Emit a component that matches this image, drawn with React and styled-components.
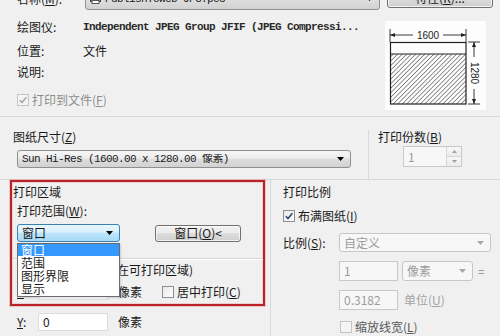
import React from 'react';
import styled, { createGlobalStyle } from 'styled-components';

const Global = createGlobalStyle`
  html, body { margin: 0; padding: 0; background: #f0f0f0; }
  body { font-family: "Noto Sans CJK SC", "Noto Sans", sans-serif; }
`;

const Dialog = styled.div`
  width: 500px;
  height: 336px;
  overflow: hidden;
  background: #f0f0f0;
  font-family: "Noto Sans CJK SC", "Noto Sans", sans-serif;
  font-size: 12px;
  line-height: 1;
  color: #1a1a1a;
  display: flex;
  flex-direction: column;
`;

const Key = styled.span`
  text-decoration: underline;
  text-underline-offset: 1px;
`;

const TopSection = styled.div`
  box-sizing: border-box;
  height: 117px;
  flex: none;
  padding: 0 7px 0 17px;
  border-bottom: 1px solid #d9d9d9;
  display: flex;
  flex-direction: column;
`;

const NameRow = styled.div`
  display: flex;
  align-items: center;
  height: 22px;
  margin-top: -12px;
  flex: none;
`;

const FieldLabel = styled.span`
  flex: none;
  width: ${(p) => p.$w}px;
  color: ${(p) => (p.$muted ? '#8d8d8d' : '#1a1a1a')};
  white-space: nowrap;
`;

const ComboBox = styled.div`
  box-sizing: border-box;
  flex: none;
  width: ${(p) => p.$w}px;
  height: ${(p) => p.$h || 18}px;
  margin-left: ${(p) => p.$ml || 0}px;
  display: flex;
  align-items: center;
  gap: 4px;
  border: 1px solid ${(p) => (p.$disabled ? '#c6c6c6' : p.$focus ? '#3c7fb1' : '#8e8f8f')};
  border-radius: 3px;
  background: ${(p) =>
    p.$disabled
      ? '#f7f7f7'
      : p.$focus
      ? 'linear-gradient(#eaf6fd, #d9f0fc 45%, #bee6fd 50%, #a7d9f5)'
      : 'linear-gradient(#f6f6f6, #ececec 45%, #dedede 50%, #d2d2d2)'};
  color: ${(p) => (p.$disabled ? '#9c9c9c' : '#1a1a1a')};
  padding: 0 6px 0 4px;
`;

const ComboText = styled.span`
  flex: 1;
  white-space: nowrap;
  overflow: hidden;
  font-family: ${(p) => (p.$mono ? '"Liberation Mono", "Noto Sans CJK SC", monospace' : 'inherit')};
  font-size: ${(p) => (p.$mono ? '11px' : '12px')};
  letter-spacing: ${(p) => (p.$mono ? '-0.6px' : '0')};
`;

const ArrowSvg = styled.svg`
  flex: none;
  width: 7px;
  height: 4px;
`;

const Arrow = ({ color = '#000' }) => (
  <ArrowSvg viewBox="0 0 7 4">
    <path d="M0 0 H7 L3.5 4 Z" fill={color} />
  </ArrowSvg>
);

const PushButton = styled.div`
  box-sizing: border-box;
  flex: none;
  width: ${(p) => p.$w}px;
  height: ${(p) => p.$h || 18}px;
  margin-left: ${(p) => p.$ml || 0}px;
  align-self: ${(p) => (p.$top ? 'flex-start' : 'center')};
  display: flex;
  align-items: center;
  justify-content: center;
  border: 1px solid #707070;
  border-radius: 3px;
  background: linear-gradient(#f2f2f2, #ebebeb 45%, #dddddd 50%, #cfcfcf);
  box-shadow: inset 0 0 0 1px rgba(255, 255, 255, 0.7);
  white-space: nowrap;
`;

const InfoBody = styled.div`
  display: flex;
  flex: 1;
`;

const InfoCol = styled.div`
  width: 368px;
  flex: none;
  padding-top: 5px;
  display: flex;
  flex-direction: column;
`;

const InfoRow = styled.div`
  display: flex;
  align-items: center;
  height: ${(p) => p.$h}px;
  margin-top: ${(p) => p.$mt || 0}px;
  flex: none;
`;

const MonoText = styled.span`
  font-family: "Liberation Mono", "Noto Sans CJK SC", monospace;
  font-size: 11px;
  letter-spacing: -0.6px;
  font-weight: 600;
  white-space: nowrap;
  color: #2a2a2a;
`;

const PreviewBox = styled.div`
  flex: none;
  width: 101px;
  height: 89px;
  margin-top: 11px;
  background: #fdfdfd;
  svg {
    display: block;
  }
`;

const MiddleSection = styled.div`
  box-sizing: border-box;
  height: 63px;
  flex: none;
  display: flex;
  border-bottom: 1px solid #d9d9d9;
`;

const PaperGroup = styled.div`
  width: 368px;
  flex: none;
  padding: 10px 0 0 13px;
  box-sizing: border-box;
  display: flex;
  flex-direction: column;
`;

const GroupTitle = styled.div`
  height: ${(p) => p.$h || 20}px;
  display: flex;
  align-items: center;
  white-space: nowrap;
  padding-left: ${(p) => p.$pl || 0}px;
  flex: none;
`;

const CopiesGroup = styled.div`
  flex: 1;
  margin-top: 13px;
  border-left: 1px solid #d9d9d9;
  padding-left: 9px;
  display: flex;
  flex-direction: column;
`;

const SpinBox = styled.div`
  box-sizing: border-box;
  width: 59px;
  height: 21px;
  margin: 2px 0 0 25px;
  border: 1px solid #c9c9c9;
  background: #f7f7f7;
  display: flex;
  color: #9c9c9c;
`;

const SpinValue = styled.span`
  flex: 1;
  padding: 4px 0 0 4px;
`;

const SpinButtons = styled.div`
  width: 14px;
  display: flex;
  flex-direction: column;
  border-left: 1px solid #d6d6d6;
`;

const SpinHalf = styled.div`
  flex: 1;
  display: flex;
  align-items: center;
  justify-content: center;
  background: linear-gradient(#f8f8f8, #ececec);
  & + & {
    border-top: 1px solid #d6d6d6;
  }
  svg {
    width: 5px;
    height: 3px;
  }
`;

const BottomSection = styled.div`
  flex: 1;
  display: flex;
`;

const LeftCol = styled.div`
  width: 265px;
  flex: none;
  padding-left: 10px;
  box-sizing: border-box;
  display: flex;
  flex-direction: column;
`;

const RedFrame = styled.div`
  box-sizing: border-box;
  height: 126px;
  flex: none;
  border: 2px solid #bb2229;
  box-shadow: 0 0 0 1px rgba(214, 120, 120, 0.35), inset 0 0 0 1px rgba(230, 150, 150, 0.35);
  padding-left: 1px;
  display: flex;
  flex-direction: column;
`;

const Row = styled.div`
  display: flex;
  align-items: center;
  flex: none;
  height: ${(p) => p.$h || 18}px;
  margin-top: ${(p) => p.$mt || 0}px;
  padding-left: ${(p) => p.$pl || 0}px;
  white-space: nowrap;
`;

const Divider = styled.div`
  height: 1px;
  flex: none;
  margin-top: ${(p) => p.$mt || 0}px;
  background: #d5d5d5;
  box-shadow: 0 1px 0 #fff;
`;

const ComboWrap = styled.div`
  position: relative;
  flex: none;
`;

const DropList = styled.div`
  position: absolute;
  top: 100%;
  left: 0;
  width: 103px;
  box-sizing: border-box;
  margin-top: 1px;
  padding-bottom: 1px;
  background: #fff;
  border: 1px solid #6c6c6c;
  z-index: 2;
  box-shadow: 1px 1px 2px rgba(0, 0, 0, 0.15);
`;

const DropItem = styled.div`
  height: ${(p) => (p.$active ? 12 : 13)}px;
  display: flex;
  align-items: center;
  padding-left: 3px;
  background: ${(p) => (p.$active ? '#3399ff' : 'transparent')};
  color: ${(p) => (p.$active ? '#ffffff' : '#1a1a1a')};
  white-space: nowrap;
`;

const TextInput = styled.div`
  box-sizing: border-box;
  flex: none;
  width: ${(p) => p.$w}px;
  height: ${(p) => p.$h || 18}px;
  margin-left: ${(p) => p.$ml || 0}px;
  border: 1px solid ${(p) => (p.$disabled ? '#c9c9c9' : '#dcdcdc')};
  background: ${(p) => (p.$disabled ? '#f7f7f7' : '#ffffff')};
  color: ${(p) => (p.$disabled ? '#9c9c9c' : '#1a1a1a')};
  display: flex;
  align-items: center;
  padding-left: 4px;
`;

const Unit = styled.span`
  flex: none;
  margin-left: ${(p) => p.$ml || 0}px;
  color: ${(p) => p.$color || '#1a1a1a'};
  white-space: nowrap;
`;

const CheckBoxBox = styled.span`
  box-sizing: border-box;
  flex: none;
  width: 12px;
  height: 12px;
  margin-left: ${(p) => p.$ml || 0}px;
  margin-right: 3px;
  border: 1px solid ${(p) => (p.$disabled ? '#c4c4c4' : '#8e8f8f')};
  background: ${(p) => (p.$disabled ? '#f4f4f4' : 'linear-gradient(135deg, #e8e8e8, #ffffff)')};
  display: flex;
  align-items: center;
  justify-content: center;
  svg {
    width: 10px;
    height: 10px;
  }
`;

const CheckBox = ({ checked, disabled, ml }) => (
  <CheckBoxBox $disabled={disabled} $ml={ml}>
    {checked && (
      <svg viewBox="0 0 10 10">
        <path
          d="M1.8 5.2 L4 7.6 L8.4 2.2"
          fill="none"
          stroke={disabled ? '#a8a8a8' : '#2c4a6e'}
          strokeWidth="1.6"
        />
      </svg>
    )}
  </CheckBoxBox>
);

const RightCol = styled.div`
  flex: 1;
  margin-left: 5px;
  border-left: 1px solid #dadada;
  padding: 2px 0 0 12px;
  display: flex;
  flex-direction: column;
`;

const PrinterIcon = () => (
  <svg width="11" height="10" viewBox="0 0 11 10" style={{ flex: 'none' }}>
    <rect x="2" y="0.5" width="7" height="3" fill="#fff" stroke="#555" />
    <rect x="0.5" y="3.5" width="10" height="4" fill="#9a9a9a" stroke="#444" />
    <rect x="2" y="6.5" width="7" height="3" fill="#fff" stroke="#555" />
  </svg>
);

const PaperPreview = () => (
  <svg width="101" height="89" viewBox="0 0 101 89">
    <defs>
      <pattern id="hatch" width="3.2" height="3.2" patternUnits="userSpaceOnUse" patternTransform="rotate(45)">
        <line x1="0" y1="0" x2="0" y2="3.2" stroke="#2a2a2a" strokeWidth="1" />
      </pattern>
    </defs>
    <g stroke="#222" strokeWidth="0.9" fill="none">
      <line x1="5" y1="8" x2="5" y2="21" />
      <line x1="81" y1="8" x2="81" y2="21" />
      <line x1="5" y1="14" x2="28" y2="14" />
      <line x1="58" y1="14" x2="81" y2="14" />
      <line x1="83" y1="21" x2="95" y2="21" />
      <line x1="83" y1="83" x2="95" y2="83" />
      <line x1="89" y1="21" x2="89" y2="36" />
      <line x1="89" y1="68" x2="89" y2="83" />
    </g>
    <g fill="#222">
      <path d="M5 14 L10 12 L10 16 Z" />
      <path d="M81 14 L76 12 L76 16 Z" />
      <path d="M89 21 L87 26 L91 26 Z" />
      <path d="M89 83 L87 78 L91 78 Z" />
    </g>
    <rect x="5" y="33" width="76" height="50" fill="url(#hatch)" />
    <rect x="5.5" y="21.5" width="75.5" height="61.5" fill="none" stroke="#222" strokeWidth="1.2" />
    <line x1="5" y1="33" x2="81" y2="33" stroke="#222" strokeWidth="1" />
    <text x="43" y="17.5" textAnchor="middle" fontFamily="Liberation Sans, sans-serif" fontSize="10" fill="#222">
      1600
    </text>
    <text
      x="0"
      y="0"
      transform="translate(85.5 52) rotate(90)"
      textAnchor="middle"
      fontFamily="Liberation Sans, sans-serif"
      fontSize="10"
      fill="#222"
    >
      1280
    </text>
  </svg>
);

export default function App() {
  return (
    <>
      <Global />
      <Dialog>
        <TopSection>
          <NameRow>
            <FieldLabel $w={68}>
              名称(<Key>M</Key>):
            </FieldLabel>
            <ComboBox $w={295} $h={22}>
              <PrinterIcon />
              <ComboText $mono>PublishToWeb JPG.pc3</ComboText>
              <Arrow />
            </ComboBox>
            <PushButton $w={106} $h={20} $ml={7} $top>
              特性(<Key>R</Key>)...
            </PushButton>
          </NameRow>
          <InfoBody>
            <InfoCol>
              <InfoRow $h={24}>
                <FieldLabel $w={66}>绘图仪:</FieldLabel>
                <MonoText>Independent JPEG Group JFIF (JPEG Compressi...</MonoText>
              </InfoRow>
              <InfoRow $h={24}>
                <FieldLabel $w={66}>位置:</FieldLabel>
                <span>文件</span>
              </InfoRow>
              <InfoRow $h={18}>
                <FieldLabel $w={66}>说明:</FieldLabel>
              </InfoRow>
              <InfoRow $h={20} $mt={9}>
                <CheckBox checked disabled />
                <FieldLabel $muted>
                  打印到文件(<Key>F</Key>)
                </FieldLabel>
              </InfoRow>
            </InfoCol>
            <PreviewBox>
              <PaperPreview />
            </PreviewBox>
          </InfoBody>
        </TopSection>

        <MiddleSection>
          <PaperGroup>
            <GroupTitle>
              图纸尺寸(<Key>Z</Key>)
            </GroupTitle>
            <ComboBox $w={334} $h={18} $ml={4} style={{ marginTop: 3 }}>
              <ComboText $mono>Sun Hi-Res (1600.00 x 1280.00 像素)</ComboText>
              <Arrow />
            </ComboBox>
          </PaperGroup>
          <CopiesGroup>
            <GroupTitle $h={14}>
              打印份数(<Key>B</Key>)
            </GroupTitle>
            <SpinBox>
              <SpinValue>1</SpinValue>
              <SpinButtons>
                <SpinHalf>
                  <svg viewBox="0 0 5 3">
                    <path d="M0 3 L2.5 0 L5 3 Z" fill="#a0a0a0" />
                  </svg>
                </SpinHalf>
                <SpinHalf>
                  <svg viewBox="0 0 5 3">
                    <path d="M0 0 L2.5 3 L5 0 Z" fill="#a0a0a0" />
                  </svg>
                </SpinHalf>
              </SpinButtons>
            </SpinBox>
          </CopiesGroup>
        </MiddleSection>

        <BottomSection>
          <LeftCol>
            <RedFrame>
              <GroupTitle $pl={0}>打印区域</GroupTitle>
              <Row $pl={4}>
                打印范围(<Key>W</Key>):
              </Row>
              <Row $pl={4} $mt={4}>
                <ComboWrap>
                  <ComboBox $w={103} $h={18} $focus>
                    <ComboText>窗口</ComboText>
                    <Arrow />
                  </ComboBox>
                  <DropList>
                    <DropItem $active>窗口</DropItem>
                    <DropItem>范围</DropItem>
                    <DropItem>图形界限</DropItem>
                    <DropItem>显示</DropItem>
                  </DropList>
                </ComboWrap>
                <PushButton $w={86} $h={17} $ml={35}>
                  窗口(<Key>O</Key>)&lt;
                </PushButton>
              </Row>
              <Divider $mt={16} />
              <Row $pl={4} $h={20} $mt={1}>
                打印偏移(原点设置在可打印区域)
              </Row>
              <Row $pl={4} $h={17} $mt={3}>
                <FieldLabel $w={21}>
                  <Key>X</Key>:
                </FieldLabel>
                <TextInput $w={70} $h={17}>0</TextInput>
                <Unit $ml={10}>像素</Unit>
                <CheckBox ml={20} />
                <Unit>
                  居中打印(<Key>C</Key>)
                </Unit>
              </Row>
            </RedFrame>
            <Row $pl={7} $mt={7} $h={18}>
              <FieldLabel $w={21}>
                <Key>Y</Key>:
              </FieldLabel>
              <TextInput $w={70} $h={18}>0</TextInput>
              <Unit $ml={10}>像素</Unit>
            </Row>
          </LeftCol>

          <RightCol>
            <GroupTitle>打印比例</GroupTitle>
            <Row $mt={5}>
              <CheckBox checked />
              <Unit>
                布满图纸(<Key>I</Key>)
              </Unit>
            </Row>
            <Row $mt={8} $h={19}>
              <FieldLabel $w={56}>
                比例(<Key>S</Key>):
              </FieldLabel>
              <ComboBox $w={152} $h={19} $disabled>
                <ComboText>自定义</ComboText>
                <Arrow color="#a8a8a8" />
              </ComboBox>
            </Row>
            <Row $mt={9} $h={20} $pl={56}>
              <TextInput $w={59} $h={20} $disabled>
                1
              </TextInput>
              <ComboBox $w={71} $h={20} $ml={4} $disabled>
                <ComboText>像素</ComboText>
                <Arrow color="#a8a8a8" />
              </ComboBox>
              <Unit $ml={5} $color="#8d8d8d">
                =
              </Unit>
            </Row>
            <Row $mt={9} $h={20} $pl={56}>
              <TextInput $w={59} $h={20} $disabled>
                0.3182
              </TextInput>
              <Unit $ml={6} $color="#a3a3a3">
                单位(<Key>U</Key>)
              </Unit>
            </Row>
            <Row $mt={11} $h={12} $pl={57}>
              <CheckBox disabled />
              <Unit $color="#5a5a5a">
                缩放线宽(<Key>L</Key>)
              </Unit>
            </Row>
          </RightCol>
        </BottomSection>
      </Dialog>
    </>
  );
}
